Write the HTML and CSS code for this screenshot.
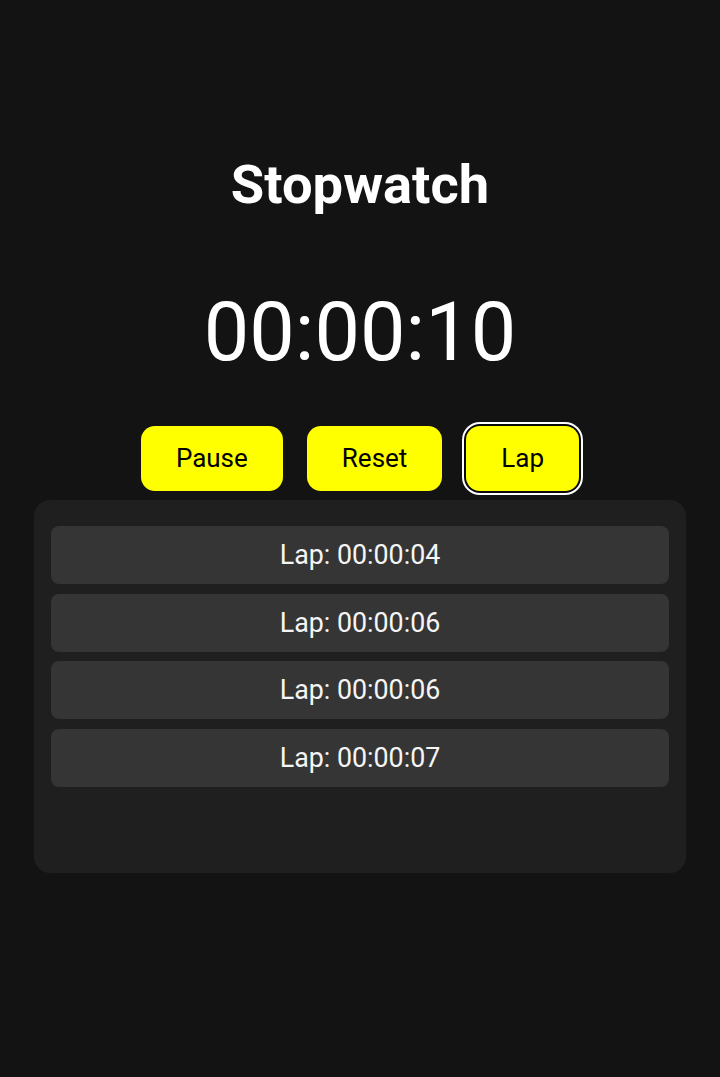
FILE: index.html
```html
<!DOCTYPE html>
<html lang="en">
<head>
<meta charset="utf-8">
<title>Stopwatch</title>
<link rel="stylesheet" href="styles.css">
</head>
<body>
<main class="app">
  <h1 class="title">Stopwatch</h1>
  <div class="time">00:00:10</div>
  <div class="controls">
    <button class="btn">Pause</button>
    <button class="btn">Reset</button>
    <button class="btn btn-focus">Lap</button>
  </div>
  <ul class="laps">
    <li class="lap">Lap: 00:00:04</li>
    <li class="lap">Lap: 00:00:06</li>
    <li class="lap">Lap: 00:00:06</li>
    <li class="lap">Lap: 00:00:07</li>
  </ul>
</main>
</body>
</html>
```

FILE: styles.css
```css
html, body {
  margin: 0;
  padding: 0;
  background: #131313;
  color: #ffffff;
  font-family: Roboto, "Liberation Sans", Arial, sans-serif;
}

.app {
  display: flex;
  flex-direction: column;
  align-items: center;
  padding: 154px 34px 0;
}

.title {
  margin: 0;
  font-size: 54.3px;
  font-weight: 700;
  line-height: 62px;
}

.time {
  margin-top: 70px;
  font-size: 81px;
  font-weight: 400;
  line-height: 94px;
}

.controls {
  display: flex;
  gap: 24px;
  margin-top: 46px;
}

.btn {
  background: #ffff00;
  color: #000;
  border: none;
  border-radius: 14px;
  font-family: inherit;
  font-size: 26px;
  line-height: 30px;
  padding: 17px 35px 18px;
  cursor: pointer;
}

.btn-focus {
  box-shadow: 0 0 0 2px #0a0a0a, 0 0 0 4px #ffffff;
}

.laps {
  list-style: none;
  margin: 9px 0 0;
  padding: 26px 17px;
  box-sizing: border-box;
  width: 652px;
  height: 373px;
  background: #1f1f1f;
  border-radius: 16px;
  display: flex;
  flex-direction: column;
  gap: 9.67px;
}

.lap {
  background: #353535;
  border-radius: 8px;
  text-align: center;
  font-size: 26.8px;
  line-height: 31px;
  padding: 14px 0 13px;
  color: #f5f5f5;
}
```
